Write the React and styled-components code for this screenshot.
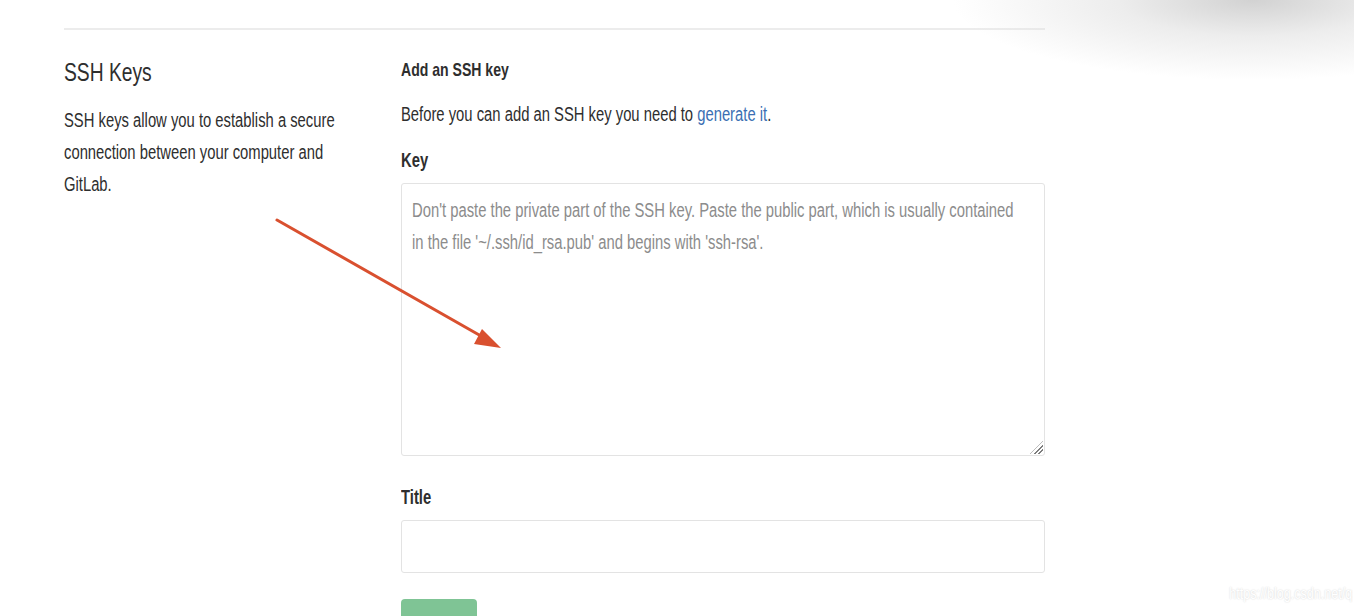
import styled, { createGlobalStyle, css } from 'styled-components';

const GlobalStyle = createGlobalStyle`
  html, body { margin: 0; padding: 0; background: #fff; }
  body {
    font-family: "Liberation Sans", Arial, sans-serif;
    color: #2e2e2e;
    overflow: hidden;
  }
`;

// the screenshot's font is a narrow grotesque; squeeze text horizontally
const narrow = css`
  transform: scaleX(0.74);
  transform-origin: left top;
`;

const Page = styled.div`
  position: relative;
  width: 1354px;
  height: 616px;
  overflow: hidden;
`;

const Content = styled.div`
  width: 981px;
  margin-left: 64px;
  padding-top: 28px;
`;

const Divider = styled.div`
  height: 2px;
  background: #ececec;
`;

const Row = styled.div`
  display: grid;
  grid-template-columns: 337px 1fr;
  padding-top: 27px;
`;

const Side = styled.div``;

const SideTitle = styled.h3`
  ${narrow};
  margin: 0 0 17px;
  font-size: 26px;
  font-weight: 400;
  color: #2e2e2e;
  line-height: 30px;
`;

const SideText = styled.p`
  ${narrow};
  margin: 0;
  font-size: 20px;
  line-height: 32px;
  color: #2e2e2e;
  width: 400px;
`;

const Main = styled.div`
  display: flex;
  flex-direction: column;
`;

const Heading = styled.h4`
  ${narrow};
  margin: 0;
  font-size: 19px;
  font-weight: 700;
  line-height: 26px;
`;

const Intro = styled.p`
  ${narrow};
  margin: 18px 0 0;
  font-size: 20px;
  line-height: 26px;
`;

const Link = styled.a`
  color: #3b6fb3;
  text-decoration: none;
`;

const Label = styled.label`
  ${narrow};
  display: block;
  margin-top: ${p => p.$gap}px;
  font-size: 20px;
  font-weight: 700;
  line-height: 26px;
`;

const Field = styled.div`
  position: relative;
  margin-top: 10px;
  width: 644px;
`;

const TextArea = styled.textarea`
  display: block;
  box-sizing: border-box;
  width: 644px;
  height: 273px;
  border: 1px solid #e3e3e3;
  border-radius: 3px;
  padding: 14px 10px;
  font-family: inherit;
  font-size: 20px;
  resize: none;
`;

const Hint = styled.div`
  ${narrow};
  position: absolute;
  left: 11px;
  top: 11px;
  width: 825px;
  font-size: 20px;
  line-height: 32px;
  color: #8c8c8c;
  pointer-events: none;
`;

const Grip = styled.span`
  position: absolute;
  right: 2px;
  bottom: 2px;
  width: 13px;
  height: 13px;
  background: repeating-linear-gradient(135deg, transparent 0 2px, #7d7d7d 2px 3.2px);
  clip-path: polygon(100% 0, 100% 100%, 0 100%);
  pointer-events: none;
`;

const Input = styled.input`
  margin-top: 10px;
  box-sizing: border-box;
  width: 644px;
  height: 53px;
  border: 1px solid #e3e3e3;
  border-radius: 3px;
`;

const Button = styled.button`
  margin-top: 26px;
  width: 76px;
  height: 34px;
  border: none;
  border-radius: 4px;
  background: #7fc495;
`;

const Arrow = styled.svg`
  position: absolute;
  left: 270px;
  top: 212px;
  pointer-events: none;
`;

const Shade = styled.div`
  position: absolute;
  top: 0;
  right: 0;
  width: 420px;
  height: 110px;
  background: radial-gradient(ellipse 300px 80px at 76% 0%, rgba(205,205,205,0.9) 0%, rgba(222,222,222,0.55) 45%, rgba(255,255,255,0) 100%);
  pointer-events: none;
`;

const Watermark = styled.div`
  position: absolute;
  right: 2px;
  bottom: 12px;
  font-size: 17px;
  color: #fff;
  text-shadow: 0 0 2px rgba(0,0,0,0.2);
  transform: scaleX(0.74);
  transform-origin: right top;
`;

export default function App() {
  return (
    <Page>
      <GlobalStyle />
      <Content>
        <Divider />
        <Row>
          <Side>
            <SideTitle>SSH Keys</SideTitle>
            <SideText>
              SSH keys allow you to establish a secure connection between your computer and GitLab.
            </SideText>
          </Side>
          <Main>
            <Heading>Add an SSH key</Heading>
            <Intro>
              Before you can add an SSH key you need to <Link href="#">generate it</Link>.
            </Intro>
            <Label $gap={20}>Key</Label>
            <Field>
              <TextArea aria-label="Key" />
              <Hint>
                Don't paste the private part of the SSH key. Paste the public part, which is usually contained in the file '~/.ssh/id_rsa.pub' and begins with 'ssh-rsa'.
              </Hint>
              <Grip />
            </Field>
            <Label $gap={28}>Title</Label>
            <Input />
            <Button />
          </Main>
        </Row>
      </Content>
      <Arrow width="240" height="150" viewBox="0 0 240 150">
        <line x1="7" y1="8" x2="218" y2="128" stroke="#d9502f" strokeWidth="3" strokeLinecap="round" />
        <polygon points="231,136 212,117 204,132" fill="#d9502f" />
      </Arrow>
      <Shade />
      <Watermark>https://blog.csdn.net/q</Watermark>
    </Page>
  );
}
